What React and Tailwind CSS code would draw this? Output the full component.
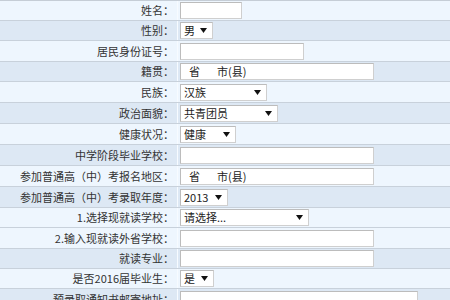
const DARK = 'bg-[#dde8f4]';
const LIGHT = 'bg-[#eef6fe]';

const rows = [
  { label: '姓名：', h: 'h-[20px]', bg: LIGHT, kind: 'input', w: 'w-[62px]' },
  { label: '性别：', h: 'h-[20px]', bg: DARK, kind: 'select', w: 'w-[33px]', value: '男' },
  { label: '居民身份证号：', h: 'h-[21px]', bg: LIGHT, kind: 'input', w: 'w-[124px]' },
  { label: '籍贯：', h: 'h-[20px]', bg: DARK, kind: 'place', w: 'w-[194px]' },
  { label: '民族：', h: 'h-[21px]', bg: LIGHT, kind: 'select', w: 'w-[87px]', value: '汉族' },
  { label: '政治面貌：', h: 'h-[21px]', bg: DARK, kind: 'select', w: 'w-[98px]', value: '共青团员' },
  { label: '健康状况：', h: 'h-[21px]', bg: LIGHT, kind: 'select', w: 'w-[56px]', value: '健康' },
  { label: '中学阶段毕业学校：', h: 'h-[21px]', bg: DARK, kind: 'input', w: 'w-[194px]' },
  { label: '参加普通高（中）考报名地区：', h: 'h-[21px]', bg: LIGHT, kind: 'place', w: 'w-[194px]' },
  { label: '参加普通高（中）考录取年度：', h: 'h-[21px]', bg: DARK, kind: 'select', w: 'w-[48px]', value: '2013' },
  { label: '1.选择现就读学校：', h: 'h-[20px]', bg: LIGHT, kind: 'select', w: 'w-[129px]', value: '请选择...' },
  { label: '2.输入现就读外省学校：', h: 'h-[21px]', bg: LIGHT, kind: 'input', w: 'w-[194px]' },
  { label: '就读专业：', h: 'h-[20px]', bg: DARK, kind: 'input', w: 'w-[194px]' },
  { label: '是否2016届毕业生：', h: 'h-[20px]', bg: LIGHT, kind: 'select', w: 'w-[34px]', value: '是' },
  { label: '预录取通知书邮寄地址：', h: 'h-[21px]', bg: DARK, kind: 'input', w: 'w-[238px]' },
];

function Arrow() {
  return (
    <svg width="7" height="5" viewBox="0 0 7 5" className="shrink-0">
      <path d="M0 0h7L3.5 5z" fill="#111" />
    </svg>
  );
}

function Field({ row }) {
  const box = `${row.w} h-[17px] bg-white border border-[#cfcfcf] border-t-[#bcbcbc] border-l-[#bcbcbc] flex items-center text-[11px] leading-none text-[#222]`;
  if (row.kind === 'select') {
    return (
      <div className={`${box} justify-between pl-[3px] pr-[5px]`}>
        <span>{row.value}</span>
        <Arrow />
      </div>
    );
  }
  if (row.kind === 'place') {
    return (
      <div className={`${box} pl-[8px]`}>
        <span>省</span>
        <span className="ml-[17px]">市(县)</span>
      </div>
    );
  }
  return <div className={box} />;
}

export default function App() {
  return (
    <div
      className="w-[450px] h-[300px] overflow-hidden bg-[#eef6fe] border-t border-[#c5cdd6]"
      style={{ fontFamily: '"Noto Sans CJK SC", "Noto Sans", sans-serif' }}
    >
      {rows.map((row, i) => (
        <div key={i} className={`${row.h} ${row.bg} flex border-b border-[#c8d1db] shrink-0`}>
          <div className="w-[178px] flex items-center justify-end pr-[3px] text-[11px] text-[#333] border-r border-[#f7fbff] whitespace-nowrap">
            {row.label}
          </div>
          <div className="flex items-center pl-[2px]">
            <Field row={row} />
          </div>
        </div>
      ))}
    </div>
  );
}
